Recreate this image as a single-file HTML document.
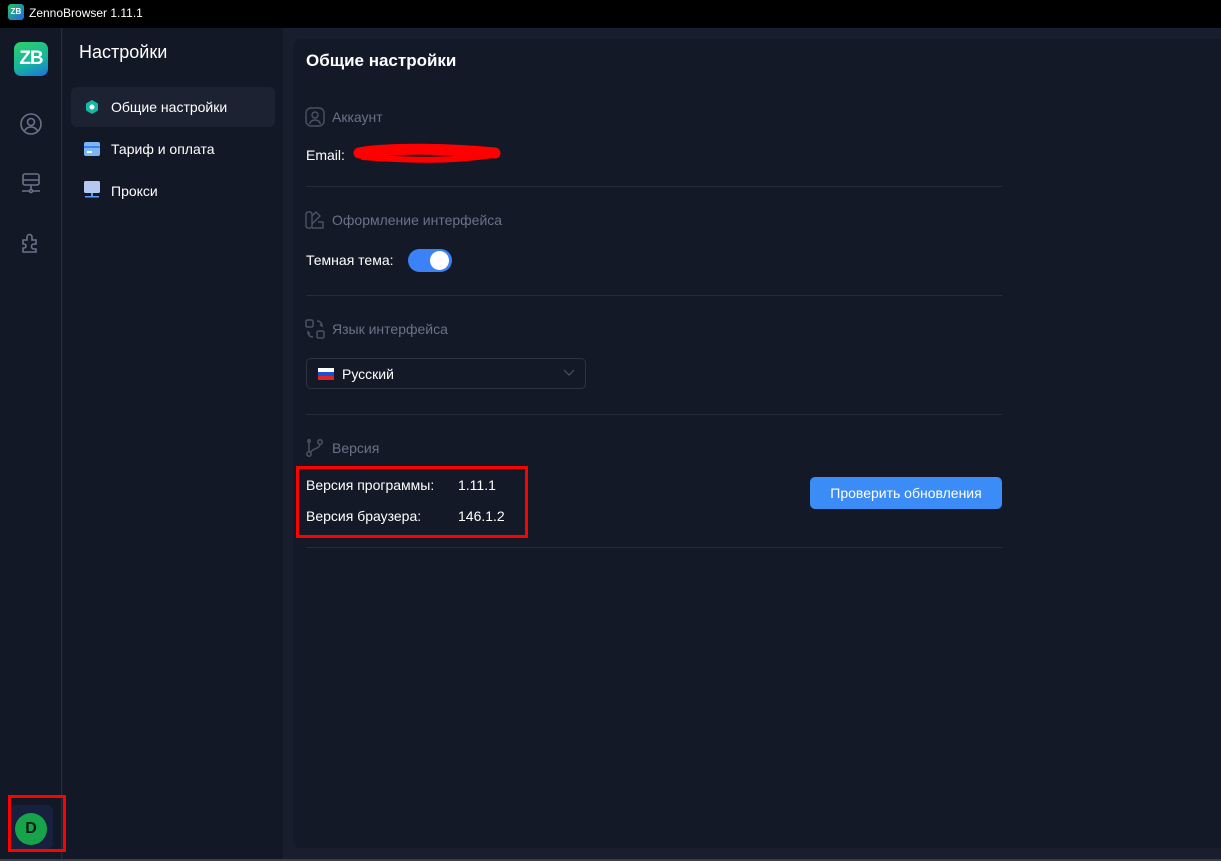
<!DOCTYPE html>
<html><head><meta charset="utf-8"><style>
*{margin:0;padding:0;box-sizing:border-box}
body{width:1221px;height:861px;overflow:hidden;background:#191e2e;font-family:"Liberation Sans",sans-serif;position:relative;color:#fff}
.title{position:absolute;left:0;top:0;width:1221px;height:28px;background:#000;}
.title span{position:absolute;left:29px;top:6px;font-size:12px;color:#fff}
.tlogo{position:absolute;left:8px;top:4px;width:16px;height:16px;border-radius:3px;background:linear-gradient(135deg,#22c55e,#2563eb);font-size:8px;font-weight:bold;text-align:center;line-height:16px}
.rail{position:absolute;left:0;top:28px;width:62px;height:831px;background:#131827;border-right:1px solid #252b3b}
.side{position:absolute;left:63px;top:28px;width:220px;height:831px;background:#131827}
.main{position:absolute;left:293px;top:39px;width:940px;height:809px;background:#131927;border-radius:8px}
.logo{position:absolute;left:14px;top:42px;width:34px;height:34px;border-radius:7px;background:linear-gradient(160deg,#2fd06a 0%,#16b3a0 60%,#1d6fe0 100%);font-weight:bold;font-size:19px;text-align:center;line-height:34px;letter-spacing:-1px}
.ic{position:absolute;left:19px}
h2{position:absolute;left:79px;top:42px;font-size:18px;font-weight:normal}
.item{position:absolute;left:71px;width:204px;height:40px;border-radius:6px;font-size:14px;line-height:40px;padding-left:40px}
.item.act{background:#1c2232}
.sec{position:absolute;left:332px;font-size:14px;color:#6b7287}
.lbl{position:absolute;font-size:14px;color:#fff}
.hr{position:absolute;left:306px;width:696px;height:1px;background:#262c3c}
</style></head><body>
<div class="title"><div class="tlogo">ZB</div><span>ZennoBrowser 1.11.1</span></div>
<div class="rail"></div>
<div class="side"></div>
<div class="main"></div>
<div style="position:absolute;left:0;top:859px;width:1221px;height:2px;background:#3a3f4a"></div>
<div class="logo">ZB</div>
<svg class="ic" style="top:112px" width="24" height="24" viewBox="0 0 24 24" fill="none" stroke="#6b7287" stroke-width="1.6"><circle cx="12" cy="12" r="10"/><circle cx="12" cy="10" r="3.5"/><path d="M5.5 19c1.5-3 4-4 6.5-4s5 1 6.5 4"/></svg>
<svg class="ic" style="top:171px" width="24" height="24" viewBox="0 0 24 24" fill="none" stroke="#6b7287" stroke-width="1.6"><rect x="4" y="3" width="16" height="11" rx="2"/><path d="M4 9h16M12 14v5M3 20h7M14 20h7"/><circle cx="12" cy="20" r="1.5"/></svg>
<svg class="ic" style="top:231px" width="24" height="24" viewBox="0 0 24 24" fill="none" stroke="#6b7287" stroke-width="1.6"><path d="M4 9h4V6a2.5 2.5 0 015 0v3h4v4h-2a2.5 2.5 0 000 5h2v3H4v-4h1a2 2 0 000-4H4z"/></svg>
<div style="position:absolute;left:9px;top:805px;width:44px;height:44px;border-radius:6px;background:#182040"></div>
<div style="position:absolute;left:15px;top:813px;width:32px;height:32px;border-radius:50%;background:#16a34a;color:#0b1f14;font-size:16px;font-weight:bold;text-align:center;line-height:32px">D</div>
<div style="position:absolute;left:8px;top:795px;width:58px;height:57px;border:3px solid #f00"></div>
<h2>Настройки</h2>
<div class="item act" style="top:87px">Общие настройки</div>
<svg style="position:absolute;left:84px;top:99px" width="16" height="16" viewBox="0 0 16 16"><path d="M8 1l6 3.5v7L8 15l-6-3.5v-7z" fill="#14b8a6"/><circle cx="8" cy="8" r="2.5" fill="#fff"/></svg>
<div class="item" style="top:129px">Тариф и оплата</div>
<svg style="position:absolute;left:84px;top:142px" width="16" height="14"><rect width="16" height="14" rx="2" fill="#7cb6f5"/><rect y="4" width="16" height="2" fill="#3b82f6"/><rect x="3" y="9" width="5" height="2" fill="#fff"/></svg>
<div class="item" style="top:171px">Прокси</div>
<svg style="position:absolute;left:84px;top:181px" width="16" height="18"><rect width="16" height="12" rx="1.5" fill="#b5c8f0"/><rect x="7" y="12" width="2" height="3" fill="#5b9cf5"/><rect x="1" y="15" width="14" height="1.5" fill="#5b9cf5"/></svg>
<div class="lbl" style="left:306px;top:51px;font-size:17px;font-weight:bold">Общие настройки</div>
<svg style="position:absolute;left:305px;top:107px" width="20" height="20" viewBox="0 0 20 20" fill="none" stroke="#4b5263" stroke-width="1.4"><rect x="1" y="1" width="18" height="18" rx="5"/><circle cx="10" cy="8" r="3"/><path d="M4.5 17c1-3 3-4 5.5-4s4.5 1 5.5 4"/></svg>
<div class="sec" style="top:109px">Аккаунт</div>
<div class="lbl" style="left:306px;top:147px">Email:</div>
<svg style="position:absolute;left:353px;top:143px" width="148" height="24"><path d="M6 10 C40 4 100 6 142 10" stroke="#f00" stroke-width="11" stroke-linecap="round" fill="none"/><path d="M10 14 C60 18 100 18 140 12" stroke="#f00" stroke-width="6" stroke-linecap="round" fill="none"/></svg>
<div class="hr" style="top:186px"></div>
<svg style="position:absolute;left:305px;top:210px" width="20" height="20" viewBox="0 0 20 20" fill="none" stroke="#4b5263" stroke-width="1.4"><rect x="1" y="2" width="6" height="16" rx="2"/><path d="M7 6l4-4 4 4-8 8M7 18h11v-6h-5"/></svg>
<div class="sec" style="top:212px">Оформление интерфейса</div>
<div class="lbl" style="left:306px;top:252px">Темная тема:</div>
<div style="position:absolute;left:408px;top:249px;width:44px;height:23px;border-radius:12px;background:#3b82f6"></div>
<div style="position:absolute;left:430px;top:251px;width:19px;height:19px;border-radius:50%;background:#fff"></div>
<div class="hr" style="top:295px"></div>
<svg style="position:absolute;left:305px;top:319px" width="20" height="20" viewBox="0 0 20 20" fill="none" stroke="#4b5263" stroke-width="1.5"><rect x="1" y="1" width="7" height="7" rx="1.5"/><rect x="12" y="12" width="7" height="7" rx="1.5"/><path d="M12 2c3 0 5 2 5 5l-2-1.5M8 18c-3 0-5-2-5-5l2 1.5"/></svg>
<div class="sec" style="top:321px">Язык интерфейса</div>
<div style="position:absolute;left:306px;top:358px;width:280px;height:31px;border:1px solid #2d3343;border-radius:5px"></div>
<div style="position:absolute;left:318px;top:368px;width:16px;height:12px;background:linear-gradient(#fff 0 33%,#1d4ed8 33% 66%,#dc2626 66%)"></div>
<div class="lbl" style="left:342px;top:366px">Русский</div>
<svg style="position:absolute;left:563px;top:369px" width="12" height="8"><path d="M1 1l5 5 5-5" stroke="#4b5263" stroke-width="1.2" fill="none"/></svg>
<div class="hr" style="top:414px"></div>
<svg style="position:absolute;left:305px;top:438px" width="20" height="20" viewBox="0 0 20 20" fill="none" stroke="#4b5263" stroke-width="1.5"><circle cx="4" cy="16" r="2.2"/><circle cx="4" cy="3" r="1.2"/><circle cx="15" cy="4" r="2.2"/><path d="M4 4v10M15 6c0 5-8 4-10 9"/></svg>
<div class="sec" style="top:440px">Версия</div>
<div class="lbl" style="left:306px;top:477px">Версия программы:</div>
<div class="lbl" style="left:458px;top:477px">1.11.1</div>
<div class="lbl" style="left:306px;top:508px">Версия браузера:</div>
<div class="lbl" style="left:458px;top:508px">146.1.2</div>
<div style="position:absolute;left:296px;top:466px;width:232px;height:72px;border:3px solid #f00"></div>
<div style="position:absolute;left:810px;top:477px;width:192px;height:32px;border-radius:5px;background:#3b8cf6;font-size:14px;text-align:center;line-height:32px">Проверить обновления</div>
<div class="hr" style="top:547px"></div>
</body></html>
